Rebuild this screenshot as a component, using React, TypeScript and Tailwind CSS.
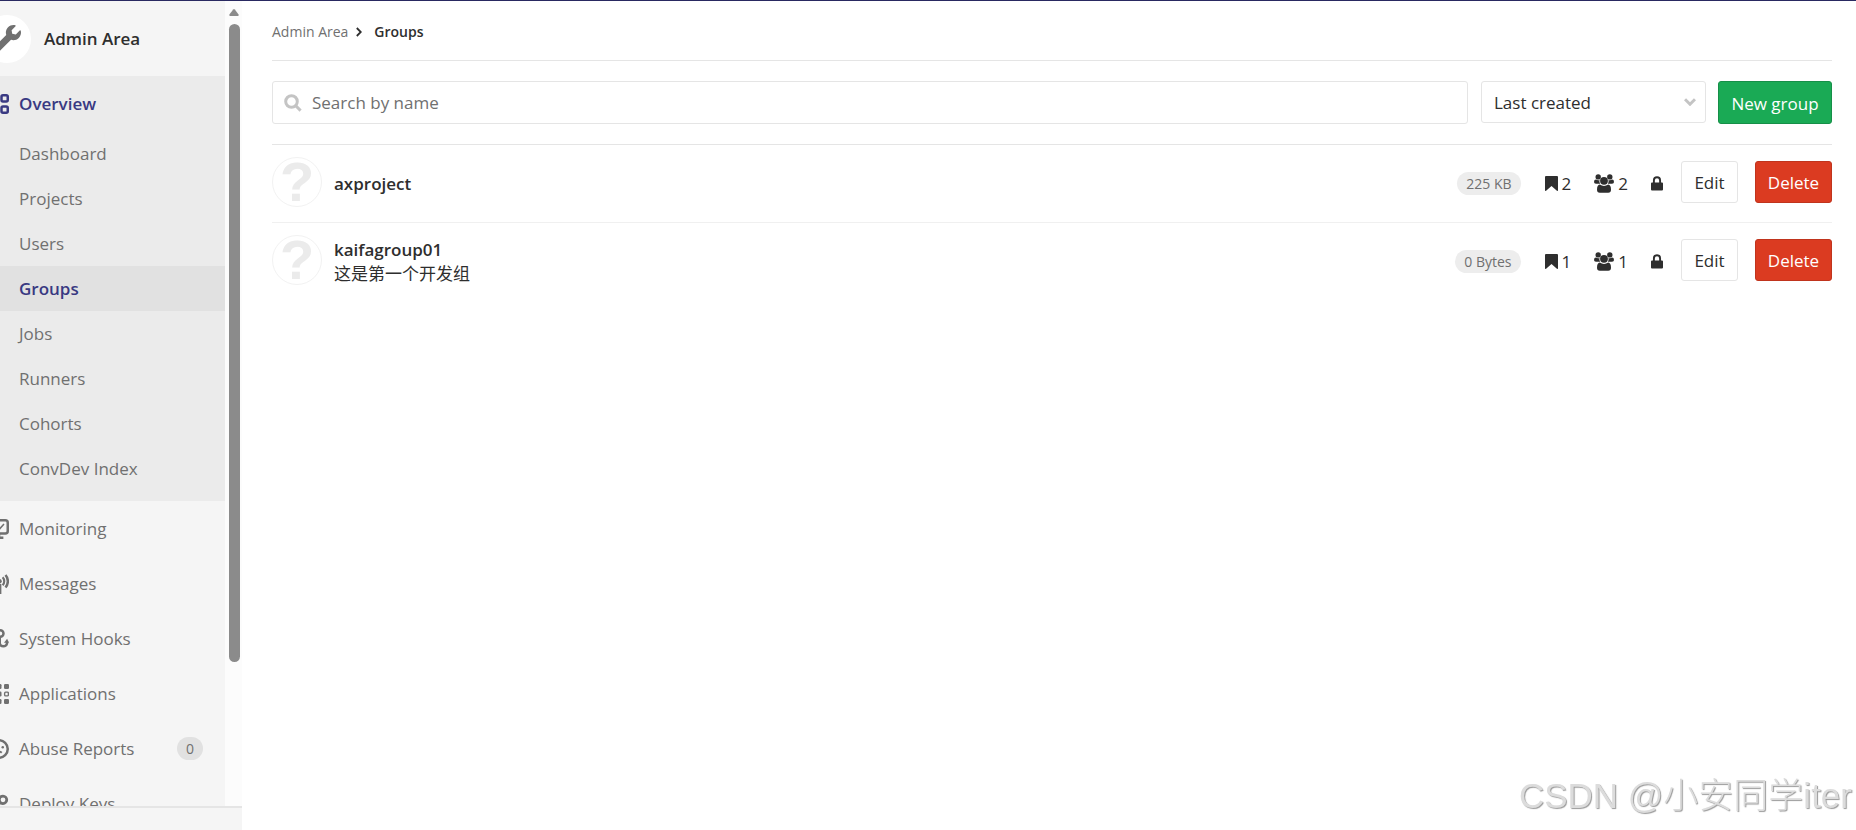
import type { ReactNode } from 'react';
import { FaWrench } from 'react-icons/fa';

type NavItem = { label: string; icon: ReactNode; badge?: string };

function NavIcon({ children }: { children: ReactNode }) {
  return (
    <svg viewBox="0 0 16 16" className="size-5 shrink-0" fill="none" stroke="currentColor" strokeWidth="2" aria-hidden="true">
      {children}
    </svg>
  );
}

const overviewIcon = (
  <NavIcon>
    <rect x="1" y="1" width="5" height="5" rx="1.2" />
    <rect x="10" y="1" width="5" height="5" rx="1.2" />
    <rect x="1" y="10" width="5" height="5" rx="1.2" />
    <rect x="10" y="10" width="5" height="5" rx="1.2" />
  </NavIcon>
);

const subItems = ['Dashboard', 'Projects', 'Users', 'Groups', 'Jobs', 'Runners', 'Cohorts', 'ConvDev Index'];

const navItems: NavItem[] = [
  {
    label: 'Monitoring',
    icon: (
      <NavIcon>
        <rect x="1" y="1" width="14" height="10.5" rx="2" />
        <path d="M4 15h7.500M8 12v2" />
        <path d="M6 6.500l2 2 4-4.500" strokeWidth="1.200" />
      </NavIcon>
    ),
  },
  {
    label: 'Messages',
    icon: (
      <NavIcon>
        <path d="M8.600 8v8" strokeWidth="2.600" />
        <circle cx="8.400" cy="5.800" r="1.800" fill="currentColor" stroke="none" />
        <path d="M10.900 2.600a4.600 4.600 0 0 1 0 6.400M5.100 2.600a4.600 4.600 0 0 0 0 6.400" strokeWidth="1.700" />
        <path d="M13.200.8a7.600 7.600 0 0 1 0 10M2.800.8a7.600 7.600 0 0 0 0 10" strokeWidth="2" />
      </NavIcon>
    ),
  },
  {
    label: 'System Hooks',
    icon: (
      <NavIcon>
        <circle cx="9" cy="3.600" r="2.600" />
        <path d="M8.600 6v5.600a3 3 0 0 0 5.800 0V10M8.600 11.600a3 3 0 0 1-5.800 0V10" strokeWidth="2" />
        <path d="M12 11l2.500-3.200 1.500 3.200z" fill="currentColor" stroke="none" />
      </NavIcon>
    ),
  },
  {
    label: 'Applications',
    icon: (
      <NavIcon>
        <g fill="currentColor" stroke="none">
          <rect x="0" y="0" width="4" height="4" rx="1" />
          <rect x="6" y="0" width="4" height="4" rx="1" />
          <rect x="12" y="0" width="4" height="4" rx="1" />
          <rect x="0" y="6" width="4" height="4" rx="1" />
          <rect x="6" y="6" width="4" height="4" rx="1" />
          <rect x="0" y="12" width="4" height="4" rx="1" />
          <rect x="6" y="12" width="4" height="4" rx="1" />
          <rect x="12" y="12" width="4" height="4" rx="1" />
        </g>
        <rect x="12.500" y="6.500" width="3" height="3" rx=".8" strokeWidth="1.100" />
      </NavIcon>
    ),
  },
  {
    label: 'Abuse Reports',
    badge: '0',
    icon: (
      <NavIcon>
        <circle cx="8" cy="8" r="7" />
        <circle cx="5" cy="6.600" r="1" fill="currentColor" stroke="none" />
        <circle cx="11" cy="6.600" r="1" fill="currentColor" stroke="none" />
        <path d="M6 11a3 3 0 0 1 4.200 0" strokeWidth="1.600" />
      </NavIcon>
    ),
  },
  {
    label: 'Deploy Keys',
    icon: (
      <NavIcon>
        <circle cx="11.200" cy="4.600" r="3" strokeWidth="2.200" />
        <path d="M8.800 7.200L1.600 14.400M4 12l2 2" />
      </NavIcon>
    ),
  },
];

const groups = [
  { name: 'axproject', description: '', size: '225 KB', projects: 2, members: 2 },
  { name: 'kaifagroup01', description: '这是第一个开发组', size: '0 Bytes', projects: 1, members: 1 },
];

function BookmarkIcon() {
  return (
    <svg viewBox="0 0 13 15" className="h-[15px] w-[13px]" fill="currentColor" aria-hidden="true">
      <path d="M1 0h11a1 1 0 0 1 1 1v13.200q0 .8-.8.7L6.500 10 .8 14.900q-.8.1-.8-.7V1a1 1 0 0 1 1-1z" />
    </svg>
  );
}

function MembersIcon() {
  return (
    <svg viewBox="0 0 20 19" className="h-[19px] w-5" fill="currentColor" aria-hidden="true">
      <circle cx="4.200" cy="2.900" r="2.700" />
      <circle cx="15.800" cy="2.900" r="2.700" />
      <path d="M2 5.600q1.800 1.100 3.500.4Q4.900 8.300 6.200 9.800H2Q0 9.800 0 8q0-2.400 2-2.400zM18 5.600q-1.800 1.100-3.500.4.6 2.300-.7 3.800H18q2 0 2-1.800 0-2.400-2-2.400z" />
      <circle cx="10" cy="6.800" r="3.900" />
      <path d="M5.800 10.600Q10 13.400 14.200 10.600q2.800.4 2.800 5.200 0 2.900-2.800 2.900H5.800Q3 18.700 3 15.800q0-4.800 2.800-5.200z" />
    </svg>
  );
}

function LockIcon() {
  return (
    <svg viewBox="0 0 12 15" className="h-[15px] w-3" fill="currentColor" aria-hidden="true">
      <path d="M1 6.500h10a1 1 0 0 1 1 1V13.500a1 1 0 0 1-1 1H1a1 1 0 0 1-1-1v-6a1 1 0 0 1 1-1z" />
      <path d="M2.900 7V4.400a3.100 3.100 0 0 1 6.200 0V7" fill="none" stroke="currentColor" strokeWidth="1.900" />
    </svg>
  );
}

function Sidebar() {
  return (
    <aside className="flex w-[242px] shrink-0 flex-col bg-[#f5f5f5]">
      <div className="flex min-h-0 flex-1">
        <div className="min-w-0 flex-1 overflow-hidden">
          <a href="#admin" className="-ml-[17px] flex h-[75px] items-center gap-[13px] font-semibold text-[#2e2e2e]">
            <span className="flex size-12 items-center justify-center rounded-full bg-white text-[#707070]">
              <FaWrench className="size-[27px]" />
            </span>
            Admin Area
          </a>
          <nav>
            <div className="bg-[#ebebeb] pb-[10px]">
              <a href="#overview" className="-ml-[11px] flex h-[55px] items-center gap-[10px] font-semibold text-[#393982]">
                {overviewIcon}
                Overview
              </a>
              <ul>
                {subItems.map((label) => (
                  <li key={label}>
                    <a
                      href={`#${label}`}
                      className={
                        label === 'Groups'
                          ? 'flex h-[45px] items-center bg-[#e1e1e1] pl-[19px] font-semibold text-[#393982]'
                          : 'flex h-[45px] items-center pl-[19px] text-[#707070]'
                      }
                    >
                      {label}
                    </a>
                  </li>
                ))}
              </ul>
            </div>
            <ul>
              {navItems.map((item) => (
                <li key={item.label}>
                  <a href={`#${item.label}`} className="-ml-[11px] flex h-[55px] items-center gap-[10px] pr-[22px] text-[#707070]">
                    {item.icon}
                    <span className="flex-1">{item.label}</span>
                    {item.badge && (
                      <span className="rounded-full bg-[#e1e1e1] px-[9px] text-sm leading-[23px]">{item.badge}</span>
                    )}
                  </a>
                </li>
              ))}
            </ul>
          </nav>
        </div>
        <div className="flex w-[17px] flex-col items-center gap-2 bg-[#fcfcfc] pt-2 pl-[1px]" aria-hidden="true">
          <svg viewBox="0 0 10 7" className="h-[7px] w-[10px] shrink-0" fill="#8b8b8b">
            <path d="M4.200.6q.8-1 1.600 0L9.600 5.600Q10 7 8.800 7H1.200Q0 7 .4 5.600z" />
          </svg>
          <div className="h-[80%] w-[11px] rounded-full bg-[#8b8b8b]" />
        </div>
      </div>
      <div className="h-6 border-t-2 border-[#e5e5e5]" />
    </aside>
  );
}

export default function App() {
  return (
    <div className="flex h-screen flex-col overflow-hidden border-t border-[#292961] bg-white font-['Open_Sans','Noto_Sans_CJK_SC',sans-serif] text-[17px] leading-6 text-[#2e2e2e]">
      <div className="flex min-h-0 flex-1">
        <Sidebar />
        <main className="min-w-0 flex-1 pr-6 pl-[30px]">
          <nav aria-label="Breadcrumb" className="flex h-[60px] items-center border-b border-[#e5e5e5] pt-[2px] text-sm">
            <a href="#admin" className="text-[#707070]">Admin Area</a>
            <svg viewBox="0 0 6 10" className="mr-3 ml-2 h-[10px] w-[6px]" fill="none" stroke="#2e2e2e" strokeWidth="1.800" aria-hidden="true">
              <path d="M.8 1l4 4-4 4" />
            </svg>
            <a href="#groups" className="font-semibold">Groups</a>
          </nav>
          <div className="flex items-start border-b border-[#e5e5e5] py-5">
            <label className="flex h-[43px] flex-1 items-center gap-[10px] rounded-[3px] border border-[#e5e5e5] px-[11px]">
              <svg viewBox="0 0 18 18" className="size-[18px] shrink-0" fill="none" stroke="#c4c4c4" strokeWidth="3" aria-hidden="true">
                <circle cx="7.500" cy="7.500" r="5.800" />
                <path d="M11.800 11.800l4.800 4.800" />
              </svg>
              <input type="search" placeholder="Search by name" aria-label="Search by name" className="min-w-0 flex-1 bg-transparent outline-none placeholder:text-[#707070]" />
            </label>
            <div className="relative ml-[13px] w-[225px]">
              <select aria-label="Sort by" className="h-[42px] w-full appearance-none rounded-[3px] border border-[#e5e5e5] bg-white pt-[2px] pl-[12px]">
                <option>Last created</option>
              </select>
              <svg viewBox="0 0 12 8" className="pointer-events-none absolute top-[17px] right-[10px] h-2 w-3" fill="none" stroke="#c4c4c4" strokeWidth="3" aria-hidden="true">
                <path d="M1 1.200l5 5 5-5" />
              </svg>
            </div>
            <button type="button" className="ml-3 h-[43px] w-[114px] rounded-[3px] border border-[#168f48] bg-[#1aaa55] pt-[2px] text-white">
              New group
            </button>
          </div>
          <ul>
            {groups.map((group) => (
              <li key={group.name} className="flex h-[78px] items-center border-b border-[#f0f0f0] last:border-transparent">
                <span className="mb-[3px] flex size-[50px] items-center justify-center rounded-full border border-[#f2f2f2] font-['Liberation_Sans',sans-serif] text-[56px] leading-none font-bold text-[#ebebeb]">
                  ?
                </span>
                <div className="ml-3 flex-1">
                  <a href={`#${group.name}`} className="block font-semibold">{group.name}</a>
                  {group.description && <p>{group.description}</p>}
                </div>
                <span className="mr-6 rounded-full bg-[#ededed] px-[9px] text-sm leading-[23px] text-[#707070]">{group.size}</span>
                <span className="mr-[23px] flex items-center gap-1">
                  <BookmarkIcon />
                  {group.projects}
                </span>
                <span className="mr-[23px] flex items-center gap-1">
                  <MembersIcon />
                  {group.members}
                </span>
                <LockIcon />
                <button type="button" className="mb-[3px] ml-[18px] h-[42px] w-[57px] rounded-[3px] border border-[#e5e5e5] bg-white pt-[2px]">Edit</button>
                <button type="button" className="mb-[3px] ml-[17px] h-[42px] w-[77px] rounded-[3px] border border-[#c0341d] bg-[#db3b21] pt-[2px] text-white">Delete</button>
              </li>
            ))}
          </ul>
        </main>
      </div>
      <p className="pointer-events-none fixed right-1 bottom-[10px] font-['Liberation_Sans','Noto_Sans_CJK_SC',sans-serif] text-[35px] leading-[48px] font-light text-[#dcdcdc] [text-shadow:1px_1px_1px_#999]">
        CSDN @小安同学iter
      </p>
    </div>
  );
}
